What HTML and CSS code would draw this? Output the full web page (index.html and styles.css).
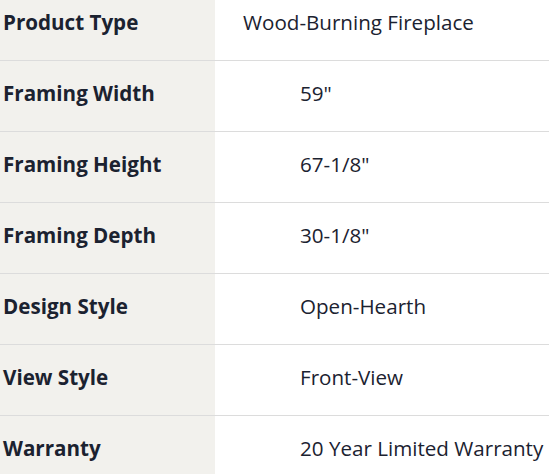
FILE: index.html
```html
<!DOCTYPE html>
<html>
<head>
<meta charset="utf-8">
<link rel="stylesheet" href="styles.css">
</head>
<body>
<div class="specs">
  <div class="row first"><div class="label">Product Type</div><div class="value">Wood-Burning Fireplace</div></div>
  <div class="row"><div class="label">Framing Width</div><div class="value">59"</div></div>
  <div class="row"><div class="label">Framing Height</div><div class="value">67-1/8"</div></div>
  <div class="row"><div class="label">Framing Depth</div><div class="value">30-1/8"</div></div>
  <div class="row"><div class="label">Design Style</div><div class="value">Open-Hearth</div></div>
  <div class="row"><div class="label">View Style</div><div class="value">Front-View</div></div>
  <div class="row last"><div class="label">Warranty</div><div class="value">20 Year Limited Warranty</div></div>
</div>
</body>
</html>
```
FILE: styles.css
```css
html, body { margin: 0; padding: 0; background: #fff; }
body { width: 551px; height: 474px; overflow: hidden; font-family: "Open Sans", "Noto Sans", sans-serif; color: #1b2230; }
.specs { margin-top: -10px; width: 549px; }
.row { display: grid; grid-template-columns: 215px 1fr; height: 70px; border-bottom: 1px solid #dcdcdc; }
.row.last { border-bottom: none; }
.label { background: #f2f1ed; font-weight: 700; font-size: 20.6px; padding-left: 3px; padding-bottom: 6px; display: flex; align-items: center; }
.value { font-size: 20.6px; padding-left: 85px; padding-bottom: 6px; display: flex; align-items: center; }
.row.first .value { padding-left: 28px; }
```
